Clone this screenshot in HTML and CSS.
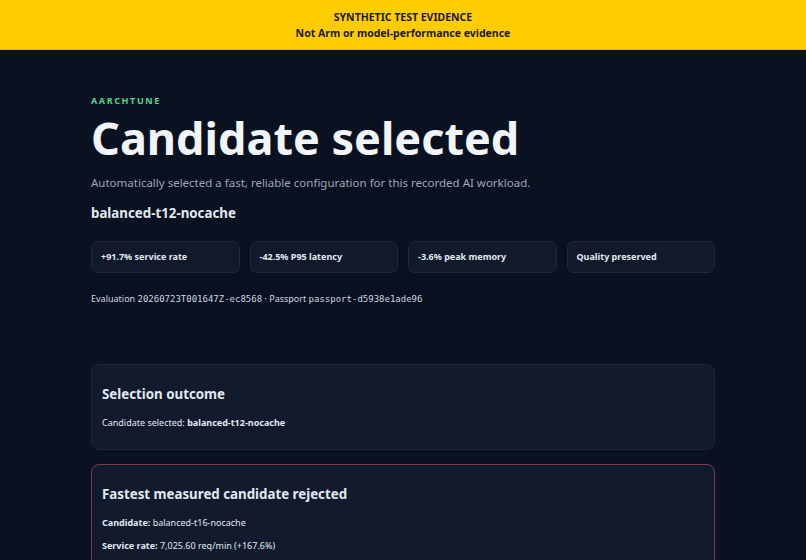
FILE: index.html
```html
<!DOCTYPE html>
<html lang="en">
<head>
<meta charset="UTF-8">
<meta name="viewport" content="width=device-width, initial-scale=1.0">
<title>AArchTune - Candidate selected</title>
<link rel="stylesheet" href="styles.css">
</head>
<body>
<div class="banner">
  <div>SYNTHETIC TEST EVIDENCE</div>
  <div>Not Arm or model-performance evidence</div>
</div>
<main class="page">
  <header class="hero">
    <div class="eyebrow">AARCHTUNE</div>
    <h1>Candidate selected</h1>
    <p class="lead">Automatically selected a fast, reliable configuration for this recorded AI workload.</p>
    <div class="candidate">balanced-t12-nocache</div>
    <div class="chips">
      <div class="chip">+91.7% service rate</div>
      <div class="chip">-42.5% P95 latency</div>
      <div class="chip">-3.6% peak memory</div>
      <div class="chip">Quality preserved</div>
    </div>
    <p class="meta">Evaluation <code>20260723T001647Z-ec8568</code> · Passport <code>passport-d5938e1ade96</code></p>
  </header>

  <section class="card">
    <h2>Selection outcome</h2>
    <p>Candidate selected: <strong>balanced-t12-nocache</strong></p>
  </section>

  <section class="card rejected">
    <h2>Fastest measured candidate rejected</h2>
    <p><strong>Candidate:</strong> balanced-t16-nocache</p>
    <p><strong>Service rate:</strong> 7,025.60 req/min (+167.6%)</p>
  </section>
</main>
</body>
</html>
```

FILE: styles.css
```css
body {
    margin: 0;
    background-color: #0a1120;
    color: #e2e8f0;
    font-family: "Noto Sans", "Open Sans", sans-serif;
}

.banner {
    background-color: #ffcc00;
    color: #1a1a1a;
    text-align: center;
    font-weight: 700;
    font-size: 10.5px;
    line-height: 16px;
    padding: 9px 0 8px;
    border-bottom: 1px solid #e0b400;
}

.page {
    padding: 45px 91px 40px;
}

.eyebrow {
    color: #4fd690;
    font-size: 9px;
    line-height: 12px;
    font-weight: 700;
    letter-spacing: 0.18em;
}

h1 {
    font-size: 45px;
    line-height: 54px;
    margin: 4px 0 10px;
    color: #f1f5f9;
}

.lead {
    color: #9aa8bc;
    font-size: 11.5px;
    line-height: 16px;
    margin: 0 0 13px;
}

.candidate {
    font-size: 13.3px;
    line-height: 18px;
    font-weight: 700;
    margin-bottom: 19px;
}

.chips {
    display: grid;
    grid-template-columns: repeat(4, 1fr);
    gap: 10px;
}

.chip {
    background-color: #111a2b;
    border: 1px solid #1e293b;
    border-radius: 7px;
    padding: 9px 9px;
    font-size: 9px;
    font-weight: 700;
    line-height: 12px;
}

.meta {
    font-size: 9px;
    line-height: 12px;
    color: #cbd5e1;
    margin: 20px 0 0;
}

.meta code {
    font-family: "DejaVu Sans Mono", monospace;
    font-size: 9px;
}

.card {
    background-color: #111b2d;
    border: 1px solid #1c2638;
    border-radius: 8px;
    padding: 20px 10px;
    margin-top: 14px;
}

.hero + .card {
    margin-top: 59px;
}

.card h2 {
    font-size: 13.3px;
    line-height: 18px;
    margin: 0 0 14px;
}

.card p {
    font-size: 9px;
    line-height: 12px;
    margin: 0 0 11px;
}

.card p:last-child {
    margin-bottom: 0;
}

.card.rejected {
    border-color: #7d3a50;
}
```
